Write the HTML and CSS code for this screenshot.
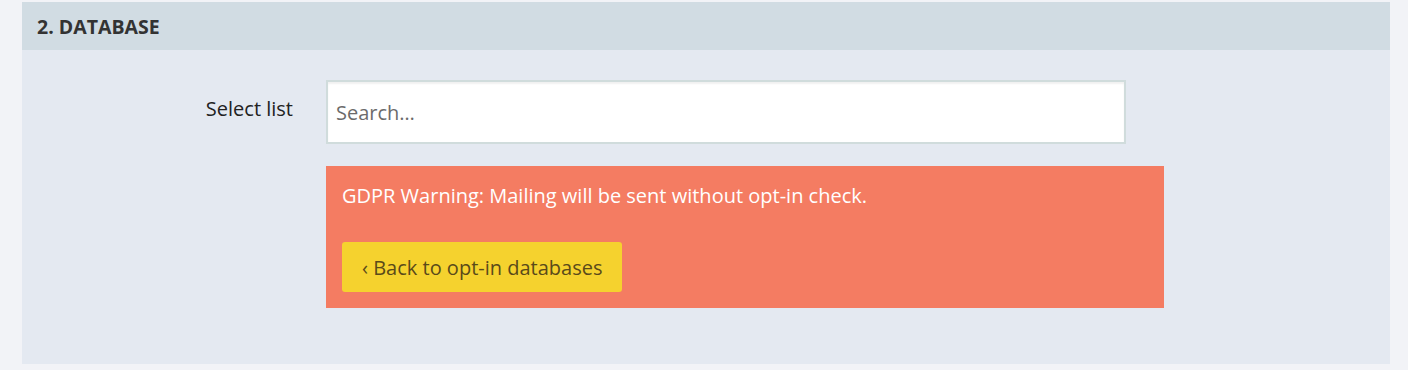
FILE: index.html
```html
<!DOCTYPE html>
<html>
<head>
  <meta charset="utf-8">
  <title>Database</title>
  <link rel="stylesheet" href="styles.css">
</head>
<body>
  <div class="panel">
    <div class="panel-head">2. Database</div>
    <div class="panel-body">
      <div class="row">
        <label class="label" for="list">Select list</label>
        <div class="field">
          <input class="search" id="list" type="text" placeholder="Search…">
        </div>
      </div>
      <div class="row">
        <div></div>
        <div class="warning">
          <p>GDPR Warning: Mailing will be sent without opt-in check.</p>
          <button class="back">‹ Back to opt-in databases</button>
        </div>
      </div>
    </div>
  </div>
</body>
</html>
```

FILE: styles.css
```css
body {
  margin: 0;
  padding: 2px 18px 6px 22px;
  background-color: #f2f3f7;
  font-family: "Open Sans", "Noto Sans", sans-serif;
  color: #333;
}

.panel {
  background-color: #e4e9f1;
}

.panel-head {
  height: 48px;
  line-height: 50px;
  padding-left: 15px;
  background-color: #d1dce3;
  font-size: 19.5px;
  font-weight: bold;
  text-transform: uppercase;
  color: #333;
}

.panel-body {
  padding: 30px 0 56px;
}

.row {
  display: grid;
  grid-template-columns: 304px 838px;
}

.label {
  text-align: right;
  padding-right: 33px;
  padding-top: 16px;
  font-size: 20px;
  line-height: 26px;
  color: #222;
}

.search {
  display: block;
  box-sizing: border-box;
  width: 800px;
  height: 64px;
  margin: 0;
  padding: 0 8px;
  border: 2px solid #d0dcdc;
  box-shadow: inset 0 2px 2px rgba(0, 0, 0, 0.06);
  background: #fff;
  font-family: inherit;
  font-size: 20px;
  color: #333;
  outline: none;
}

.search::placeholder {
  color: #6b6b6b;
}

.warning {
  margin-top: 22px;
  height: 142px;
  box-sizing: border-box;
  padding: 17px 16px 16px;
  background-color: #f47c62;
  color: #fff;
}

.warning p {
  margin: 0 0 33px;
  font-size: 20px;
  line-height: 26px;
}

.back {
  height: 50px;
  padding: 0 20px;
  border: none;
  border-radius: 3px;
  background-color: #f5d22e;
  color: #5a4a1a;
  font-family: inherit;
  font-size: 20px;
  cursor: pointer;
}
```
